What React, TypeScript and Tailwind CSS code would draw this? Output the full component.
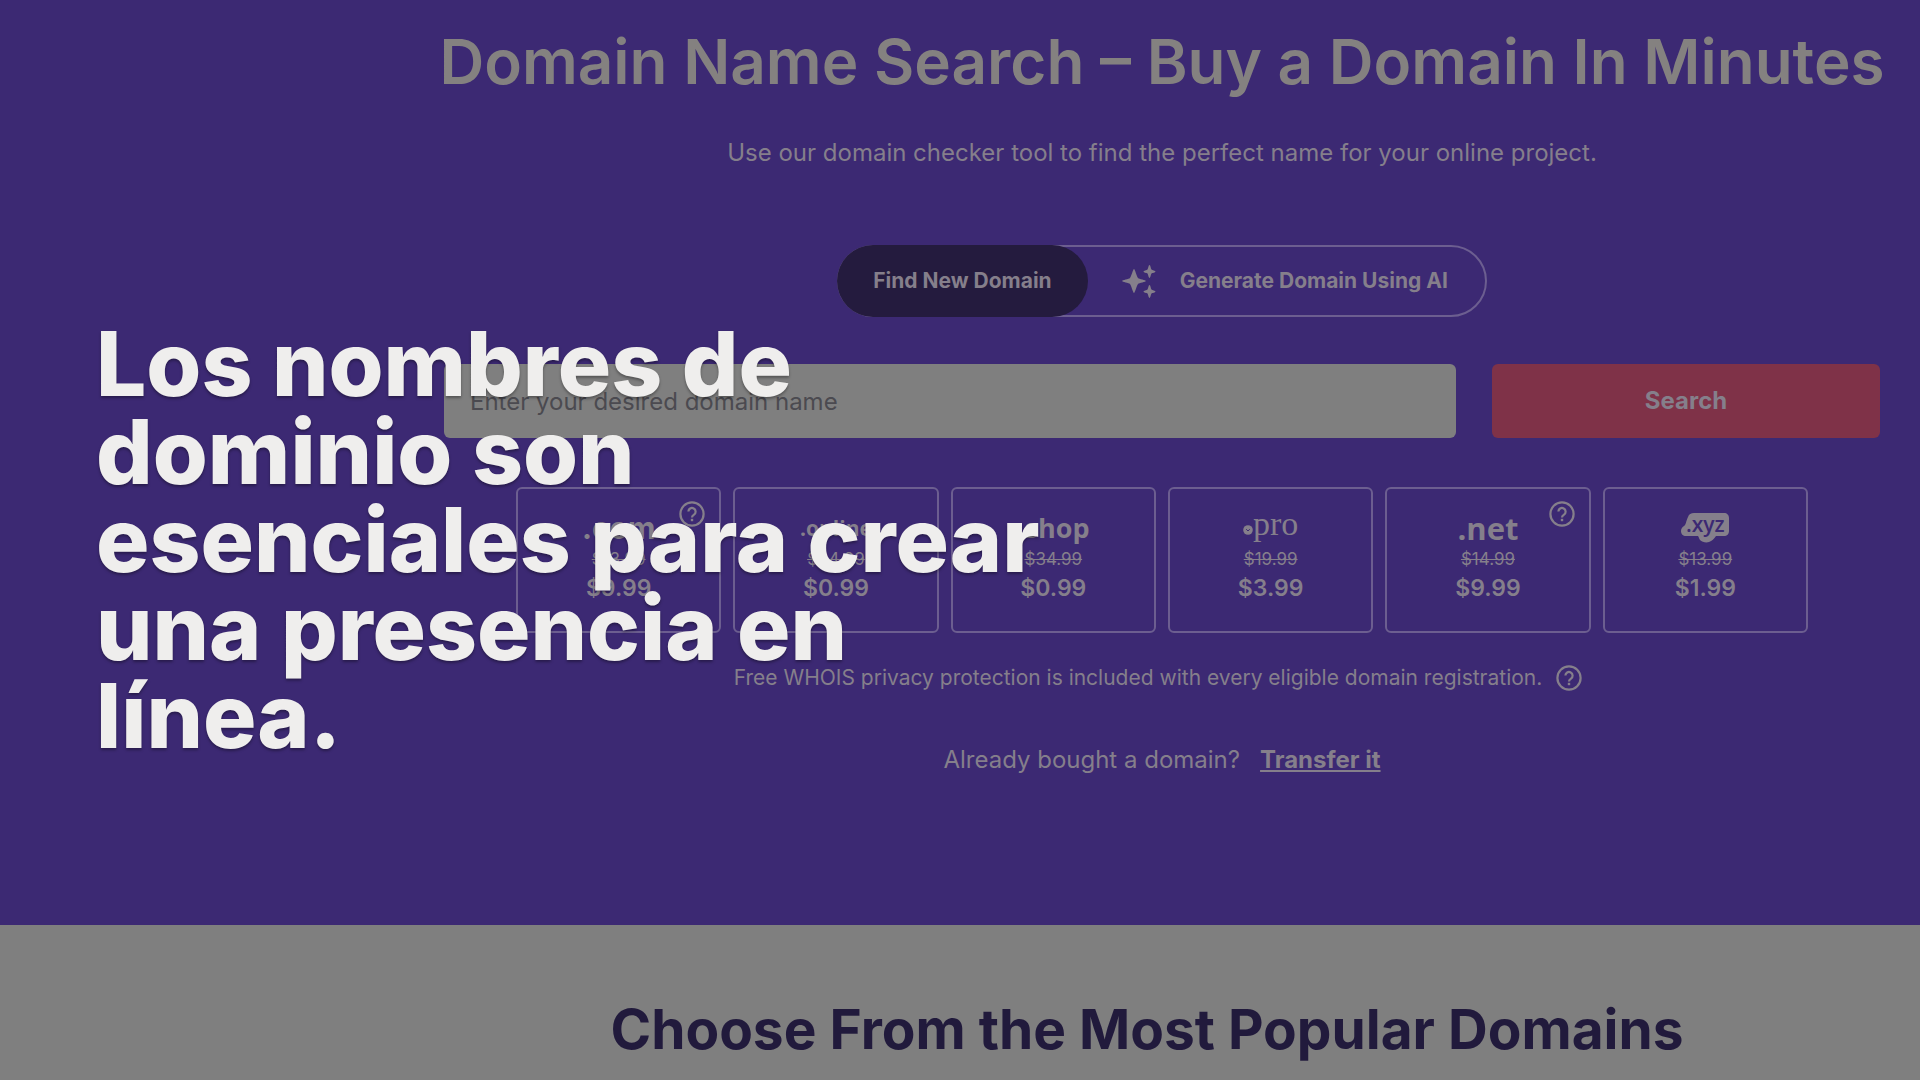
import React from "react";

type Tld = {
  name: string;
  logo: React.ReactNode;
  oldPrice: string;
  price: string;
  help?: boolean;
};

function HelpIcon() {
  return (
    <svg viewBox="0 0 26 26" fill="none" stroke="currentColor" className="h-[26px] w-[26px]" aria-hidden="true">
      <circle cx="13" cy="13" r="11.6" strokeWidth="2.2" />
      <path d="M9.4 10.6a3.6 3.6 0 1 1 5.6 3c-1.3.9-2 1.4-2 2.8" strokeWidth="2.2" />
      <path d="M13 17.8v2.4" strokeWidth="2.4" />
    </svg>
  );
}

function SparklesIcon() {
  return (
    <svg viewBox="0 0 34 34" fill="currentColor" className="h-[34px] w-[34px]" aria-hidden="true">
      <path d="M12 5c.8 0 3 8 4 9s8 2.2 8 3-7 2-8 3-3.2 9-4 9-3-8-4-9-8-2.2-8-3 7-2 8-3 3.2-9 4-9z" />
      <path d="M27.5 1c1 0 1.3 3.7 2 4.4s4 1.1 4 2.1-3.3 1.4-4 2.1-1 4.4-2 4.4-1.3-3.7-2-4.4-4-1.1-4-2.1 3.3-1.4 4-2.1 1-4.4 2-4.4z" />
      <path d="M27.5 21c1 0 1.3 3.7 2 4.4s4 1.1 4 2.1-3.3 1.4-4 2.1-1 4.4-2 4.4-1.3-3.7-2-4.4-4-1.1-4-2.1 3.3-1.4 4-2.1 1-4.4 2-4.4z" />
    </svg>
  );
}

function ProLogo() {
  return (
    <span className="flex h-8 items-baseline font-['Liberation_Serif',serif] text-[34px] leading-6">
      <svg viewBox="0 0 10 10" className="h-[10px] w-[10px]" aria-hidden="true">
        <circle cx="5" cy="5" r="4.8" fill="currentColor" />
        <path d="M3.2 4.2 5 6l1.8-1.8" stroke="#3c2973" fill="none" />
      </svg>
      pro
    </span>
  );
}

function XyzLogo() {
  return (
    <span className="relative flex h-8 w-12 items-center justify-center">
      <svg viewBox="0 0 48 32" className="absolute inset-0 h-8 w-12" fill="currentColor" aria-hidden="true">
        <path d="M13 1h30c3 0 5 2 5 5v13c0 3-2 5-5 5H35c-2 3-4 5-7 6-3 1-7 0-9-2-1-1-1-3-2-4H5c-3 0-5-2-5-5 0-2 1-4 3-5 2-1 2-5 4-9 1-3 3-4 6-4z" />
      </svg>
      <span className="relative pb-2 font-['Open_Sans',sans-serif] text-[21px] leading-6 font-semibold text-[#3c2973]">
        .xyz
      </span>
    </span>
  );
}

const tlds: Tld[] = [
  {
    name: "com",
    logo: <span className="text-[30px] leading-8 font-bold">.com</span>,
    oldPrice: "$13.99",
    price: "$9.99",
    help: true,
  },
  {
    name: "online",
    logo: <span className="font-['Open_Sans',sans-serif] text-[21px] leading-8 font-bold">.online</span>,
    oldPrice: "$34.99",
    price: "$0.99",
  },
  {
    name: "shop",
    logo: <span className="font-['Open_Sans',sans-serif] text-[27px] leading-8 font-bold">.shop</span>,
    oldPrice: "$34.99",
    price: "$0.99",
  },
  { name: "pro", logo: <ProLogo />, oldPrice: "$19.99", price: "$3.99" },
  {
    name: "net",
    logo: <span className="font-['Open_Sans',sans-serif] text-[31px] leading-8 font-bold">.net</span>,
    oldPrice: "$14.99",
    price: "$9.99",
    help: true,
  },
  { name: "xyz", logo: <XyzLogo />, oldPrice: "$13.99", price: "$1.99" },
];

function TldCard({ tld }: { tld: Tld }) {
  return (
    <li className="relative flex h-[146px] flex-1 flex-col items-center rounded-md border-2 border-[#6c5e90] pt-[23px]">
      {tld.help && (
        <button type="button" aria-label={`About .${tld.name}`} className="absolute top-3 right-[14px]">
          <HelpIcon />
        </button>
      )}
      {tld.logo}
      <s className="mt-[5px] text-[17px] leading-5">{tld.oldPrice}</s>
      <span className="mt-[3px] text-[23px] leading-8 font-semibold">{tld.price}</span>
    </li>
  );
}

export default function App() {
  return (
    <main className="relative min-h-screen overflow-hidden bg-[#7f7f7f] font-['Inter',sans-serif] text-[#857f8b]">
      <section className="flex flex-col items-center bg-[#3c2973] pr-10 pb-[149px] pl-[444px]">
        <h1 className="pt-6 text-[62px] leading-[76px] font-semibold whitespace-nowrap text-[#848180]">
          Domain Name Search – Buy a Domain In Minutes
        </h1>
        <p className="mt-[37px] text-[24px] leading-8">
          Use our domain checker tool to find the perfect name for your online project.
        </p>

        <div className="mt-[76px] flex h-[72px] rounded-full border-2 border-[#6c5e90] text-[21px] font-bold">
          <button type="button" className="-m-[2px] rounded-full bg-[#241b3e] px-9">
            Find New Domain
          </button>
          <button type="button" className="flex items-center gap-6 pr-[37px] pl-9">
            <SparklesIcon />
            Generate Domain Using AI
          </button>
        </div>

        <form className="mt-[47px] flex w-full gap-9" onSubmit={(e) => e.preventDefault()}>
          <input
            type="text"
            aria-label="Domain name"
            placeholder="Enter your desired domain name"
            className="h-[74px] min-w-0 flex-1 rounded-md bg-[#7f7f7f] px-[26px] text-[24px] placeholder:text-[#4b4a50]"
          />
          <button type="submit" className="h-[74px] w-[388px] rounded-md bg-[#7f3248] text-[24px] font-bold">
            Search
          </button>
        </form>

        <ul className="mt-[49px] flex w-full gap-3 px-[72px]">
          {tlds.map((tld) => (
            <TldCard key={tld.name} tld={tld} />
          ))}
        </ul>

        <p className="mt-[29px] flex items-center gap-[14px] pr-2 text-[21px] leading-8">
          Free WHOIS privacy protection is included with every eligible domain registration.
          <button type="button" aria-label="About WHOIS privacy">
            <HelpIcon />
          </button>
        </p>
        <p className="mt-[50px] text-[24px] leading-8">
          Already bought a domain?
          <a href="#transfer" className="ml-5 font-bold underline underline-offset-2">
            Transfer it
          </a>
        </p>
      </section>

      <section className="flex justify-center pt-[70px] pr-[70px] pl-[444px]">
        <h2 className="text-[55px] leading-[68px] font-bold whitespace-nowrap text-[#211a3c]">
          Choose From the Most Popular Domains
        </h2>
      </section>

      <p
        lang="es"
        className="pointer-events-none absolute top-[320px] left-24 text-[89px] leading-[88px] font-extrabold text-[#efeeed] text-shadow-[0_2px_3px_rgba(0,0,0,0.35)]"
      >
        Los nombres de
        <br />
        dominio son
        <br />
        esenciales para crear
        <br />
        una presencia en
        <br />
        línea.
      </p>
    </main>
  );
}
